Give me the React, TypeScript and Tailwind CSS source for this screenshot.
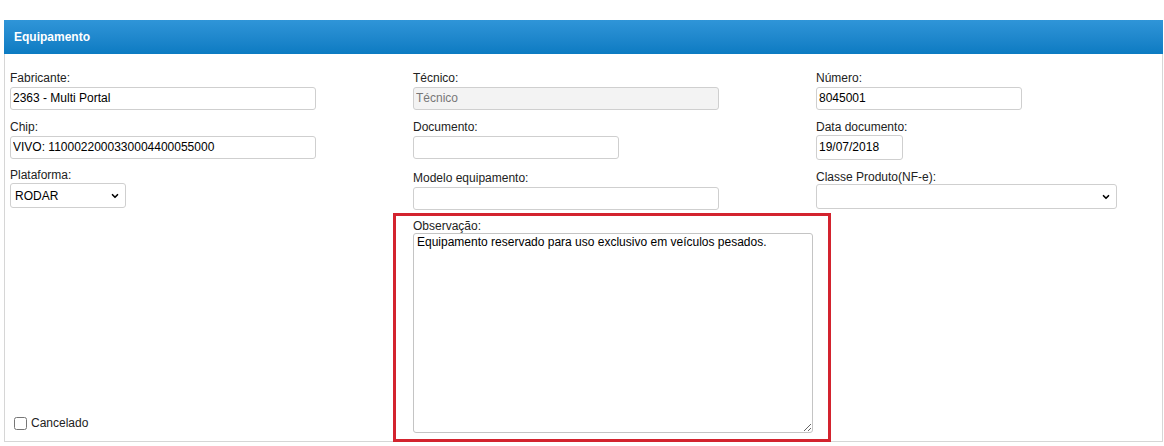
import { ChevronDown } from 'lucide-react';

const font = { fontFamily: '"Liberation Sans", Arial, sans-serif' };

function Label({ text, className = '' }: { text: string; className?: string }) {
  return <div className={`h-[14px] text-[12px] leading-[14px] text-[#222] ${className}`}>{text}</div>;
}

function TextInput({ value, width, disabled, tall }: { value: string; width: string; disabled?: boolean; tall?: boolean }) {
  return (
    <input
      readOnly
      value={value}
      className={`${width} ${tall ? 'h-[25px]' : 'h-[23px]'} rounded-[3px] border border-[#cfcfcf] px-[2px] text-[12px] outline-none ${
        disabled ? 'bg-[#f3f3f3] text-[#777]' : 'bg-white text-black'
      }`}
    />
  );
}

function Select({ value, width }: { value: string; width: string }) {
  return (
    <div className={`relative h-[25px] ${width}`}>
      <div className="flex h-full items-center rounded-[3px] border border-[#cfcfcf] bg-white pl-[4px] text-[12px] text-black">
        {value}
      </div>
      <ChevronDown className="absolute right-[6px] top-[8px] h-[10px] w-[10px] text-black" strokeWidth={4} />
    </div>
  );
}

export default function App() {
  return (
    <div className="min-h-[446px] bg-white pt-[20px]" style={font}>
      <div className="ml-[4px] w-[1159px]">
        <div className="flex h-[34px] items-center bg-gradient-to-b from-[#2f95d8] to-[#0b7bc2] pl-[10px] text-[12px] font-bold text-white">
          Equipamento
        </div>
        <div className="grid grid-cols-[403px_403px_1fr] border-x border-b border-[#d6d6d6] pl-[5px] pt-[17px]">
          {/* row 1 */}
          <div className="h-[49px]">
            <Label text="Fabricante:" />
            <TextInput value="2363 - Multi Portal" width="w-[306px]" />
          </div>
          <div className="h-[49px]">
            <Label text="Técnico:" />
            <TextInput value="Técnico" width="w-[306px]" disabled />
          </div>
          <div className="h-[49px]">
            <Label text="Número:" />
            <TextInput value="8045001" width="w-[206px]" />
          </div>

          {/* row 2 */}
          <div className="h-[48px]">
            <Label text="Chip:" />
            <TextInput value="VIVO: 1100022000330004400055000" width="w-[306px]" />
          </div>
          <div className="h-[48px]">
            <Label text="Documento:" />
            <TextInput value="" width="w-[206px]" />
          </div>
          <div className="h-[48px]">
            <Label text="Data documento:" />
            <TextInput value="19/07/2018" width="w-[87px]" tall />
          </div>

          {/* row 3 */}
          <div className="h-[45px]">
            <Label text="Plataforma:" className="mb-[1px]" />
            <Select value="RODAR" width="w-[116px]" />
          </div>
          <div className="h-[45px] pt-[3px]">
            <Label text="Modelo equipamento:" />
            <TextInput value="" width="w-[306px]" />
          </div>
          <div className="h-[45px] pt-[2px]">
            <Label text="Classe Produto(NF-e):" />
            <Select value="" width="w-[301px]" />
          </div>

          {/* row 4 */}
          <div className="flex items-end pb-[9px] pl-[4px]">
            <label className="flex items-center gap-[4px] text-[12px] text-[#222]">
              <input type="checkbox" className="m-0 h-[13px] w-[13px]" />
              Cancelado
            </label>
          </div>
          <div className="-mb-[1px] -ml-[20px] w-[438px] border-[3px] border-[#d3232e] pb-[6px] pl-[17px] pr-[15px] pt-[3px]">
            <Label text="Observação:" />
            <textarea
              readOnly
              value="Equipamento reservado para uso exclusivo em veículos pesados."
              className="block h-[200px] w-[400px] rounded-[3px] border border-[#c4c4c4] bg-white px-[3px] py-[1px] text-[12px] leading-[14px] text-black outline-none"
            />
          </div>
          <div />
        </div>
      </div>
    </div>
  );
}
